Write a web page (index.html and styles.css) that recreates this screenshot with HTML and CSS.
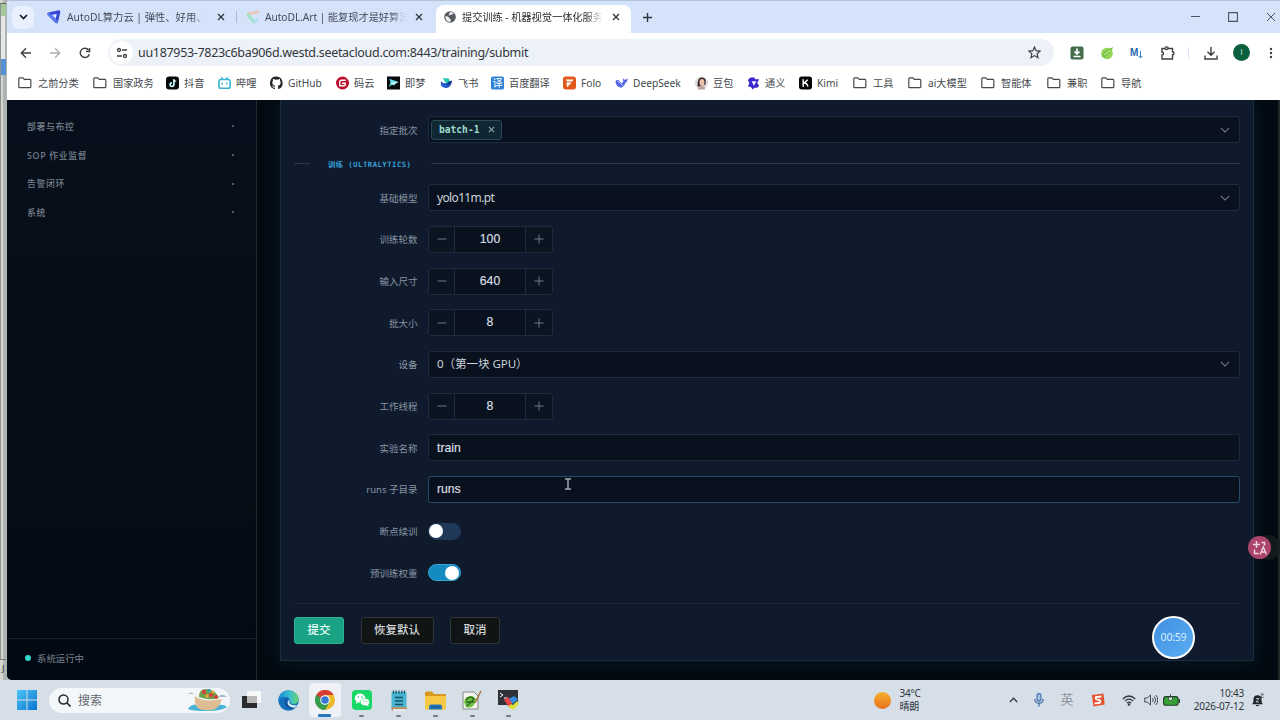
FILE: index.html
```html
<!DOCTYPE html>
<html lang="zh-CN">
<head>
<meta charset="utf-8">
<title>提交训练</title>
<link rel="stylesheet" href="styles.css">
</head>
<body>
<svg class="defs" width="0" height="0">
  <symbol id="folder" viewBox="0 0 15 13"><path d="M.8 1.9q0-1 1-1h3.4l1.6 1.7h6q1 0 1 1v7q0 1-1 1h-11q-1 0-1-1z" fill="none" stroke="#45494d" stroke-width="1.3"/></symbol>
  <symbol id="x" viewBox="0 0 8 8"><path d="M1 1l6 6M7 1L1 7" fill="none" stroke="currentColor" stroke-width="1.3"/></symbol>
  <symbol id="chev" viewBox="0 0 10 6"><path d="M.8.8L5 5 9.200.8" fill="none" stroke="currentColor" stroke-width="1.1"/></symbol>
  <symbol id="minus" viewBox="0 0 10 10"><path d="M.5 5h9" stroke="currentColor" stroke-width="1"/></symbol>
  <symbol id="plus" viewBox="0 0 10 10"><path d="M.5 5h9M5 .5v9" stroke="currentColor" stroke-width="1"/></symbol>
</svg>
<div class="screen">
 <div class="desktop">
  <div class="behind"><i class="b1"></i><i class="b2"></i><i class="b3"></i><i class="b4"></i><span class="b5">J</span></div>
  <div class="browser">
   <div class="tabstrip">
    <div class="tabsearch"><svg width="9" height="6"><path d="M1 1l3.500 3.500L8 1" fill="none" stroke="#15181c" stroke-width="1.700"/></svg></div>
    <div class="tab t1">
      <svg width="14" height="14" viewBox="0 0 14 14"><path d="M1.800 4L11.800 1.800 9.500 11.800z" fill="none" stroke="#3846d4" stroke-width="3" stroke-linejoin="round"/><path d="M1.800 4.500l7.500 7.300" stroke="#5b7cf0" stroke-width="2.800" stroke-linecap="round"/></svg>
      <span class="tt w1">AutoDL算力云 | 弹性、好用、省</span><svg class="cl" width="8" height="8"><use href="#x"/></svg>
    </div>
    <i class="tabsep"></i>
    <div class="tab t2">
      <svg width="14" height="14" viewBox="0 0 14 14"><path d="M2 4L12 2" stroke="#efc5b4" stroke-width="2.600" stroke-linecap="round"/><path d="M2 5l6 7" stroke="#9fe3c4" stroke-width="3" stroke-linecap="round"/><path d="M8 12q3-1 3-4" stroke="#b0dcf0" stroke-width="2.400" fill="none"/></svg>
      <span class="tt w2">AutoDL.Art | 能复现才是好算法</span><svg class="cl" width="8" height="8"><use href="#x"/></svg>
    </div>
    <div class="tab active">
      <svg width="12" height="12" viewBox="0 0 12 12"><circle cx="6" cy="6" r="5.800" fill="#55595e"/><path d="M1.300 5q3 0 4 2t2 2q-1 2-2 2-4-1-4-6zM6 1q2-.2 3.800 1.600Q8 4 7 3.700T5 4.500 6 1z" fill="#eef1f5"/></svg>
      <span class="tt w3">提交训练 - 机器视觉一体化服务</span><svg class="cl" width="8" height="8"><use href="#x"/></svg>
    </div>
    <svg class="newtab" width="9" height="9" viewBox="0 0 9 9"><path d="M0 4.500h9M4.500 0v9" stroke="#30363c" stroke-width="1.400"/></svg>
    <div class="winctl">
      <svg width="9" height="9"><path d="M0 4.500h9" stroke="#4b5563" stroke-width="1"/></svg>
      <svg width="10" height="10"><path d="M.6.6h8.800v8.800H.6z" fill="none" stroke="#4b5563" stroke-width="1.100"/></svg>
      <svg width="10" height="10"><path d="M1 1l8 8M9 1L1 9" stroke="#4b5563" stroke-width="1"/></svg>
    </div>
   </div>
   <div class="toolbar">
     <svg class="nav" width="12" height="12" viewBox="0 0 12 12"><path d="M11 6H1.500M6 1.300L1.300 6 6 10.700" fill="none" stroke="#3c4043" stroke-width="1.400"/></svg>
     <svg class="nav" width="12" height="12" viewBox="0 0 12 12"><path d="M1 6h9.500M6 1.300L10.700 6 6 10.700" fill="none" stroke="#abafb3" stroke-width="1.300"/></svg>
     <svg class="nav" width="12" height="12" viewBox="0 0 12 12"><path d="M10.300 7.200A4.600 4.600 0 1 1 9.500 3M10.600 1v3.500H7" fill="none" stroke="#3c4043" stroke-width="1.400"/></svg>
     <div class="omni">
       <div class="site"><svg width="12" height="12" viewBox="0 0 12 12"><path d="M6 3h5M1 9h5" stroke="#3c4043" stroke-width="1.400"/><circle cx="3" cy="3" r="1.500" fill="none" stroke="#3c4043" stroke-width="1.300"/><circle cx="9" cy="9" r="1.500" fill="none" stroke="#3c4043" stroke-width="1.300"/></svg></div>
       <span class="url">uu187953-7823c6ba906d.westd.seetacloud.com:8443/training/submit</span>
       <svg class="star" width="13" height="13" viewBox="0 0 13 13"><path d="M6.500 1l1.600 3.700 4 .4-3 2.600.9 4-3.500-2.100L3 11.700l.9-4-3-2.600 4-.4z" fill="none" stroke="#3c4043" stroke-width="1.200"/></svg>
     </div>
     <div class="exts">
       <svg width="14" height="14" viewBox="0 0 14 14"><rect x=".5" y=".5" width="13" height="13" rx="2" fill="#456c4b"/><path d="M7 2.500v5M4.500 5.500L7 8l2.500-2.500M3.500 10.500h7" fill="none" stroke="#fff" stroke-width="1.700"/></svg>
       <svg width="14" height="14" viewBox="0 0 14 14"><circle cx="7" cy="7.500" r="5.800" fill="#93d456"/><path d="M2 10Q4 4 11 2L13 1 12 4Q9 5 5 12" fill="#77c443"/><path d="M4 9l6-5" stroke="#d5f0b5"/></svg>
       <div class="md">M<svg width="5" height="8"><path d="M2.500 0v7M.5 5l2 2 2-2" stroke="#3483ca" fill="none"/></svg></div>
       <svg width="14" height="14" viewBox="0 0 14 14"><path d="M1 2.500h3q0 1 1.500 1T7 2.500h4.500v3.200q1.500 0 1.500 1.500t-1.500 1.500v4.300H1V9q1.500 0 1.500-1.500T1 6z" fill="none" stroke="#3c4043" stroke-width="1.400"/><path d="M4.500 2q0-1.200 1.300-1.200T7.200 2" fill="none" stroke="#3c4043" stroke-width="1.300"/></svg>
       <i class="esep"></i>
       <svg width="14" height="14" viewBox="0 0 14 14"><path d="M7 1v8M3.500 5.700L7 9.200l3.500-3.500M1 9.500V13h12V9.500" fill="none" stroke="#3c4043" stroke-width="1.400"/></svg>
       <b class="avatar">I</b>
       <svg class="dots" width="4" height="12"><circle cx="2" cy="2" r="1.200" fill="#3c4043"/><circle cx="2" cy="6" r="1.200" fill="#3c4043"/><circle cx="2" cy="10" r="1.200" fill="#3c4043"/></svg>
     </div>
   </div>
   <div class="bookmarks">
     <span class="f"><svg><use href="#folder"/></svg>之前分类</span>
     <span class="f"><svg><use href="#folder"/></svg>国家政务</span>
     <span><svg viewBox="0 0 14 14"><rect width="14" height="14" rx="3.500" fill="#08080b"/><path d="M8.300 3v5.500A2 2 0 1 1 6 6.700" fill="none" stroke="#4be4e7" stroke-width="1.700"/><path d="M8.500 3q.5 2 2.500 2.200M8.600 3v5.500A2 2 0 1 1 6.400 6.800" fill="none" stroke="#fff" stroke-width="1.200"/></svg>抖音</span>
     <span><svg viewBox="0 0 14 14"><rect x="1" y="3.300" width="12" height="9.400" rx="2" fill="none" stroke="#35b5cf" stroke-width="1.700"/><path d="M3.500.8l2 2.300M10.500.8l-2 2.300M4.500 6.500v2M9.500 6.500v2" stroke="#35b5cf" stroke-width="1.500"/></svg>哔哩</span>
     <span><svg viewBox="0 0 16 16"><path fill="#22262b" d="M8 0a8 8 0 0 0-2.500 15.600c.4.100.5-.2.500-.4v-1.500c-2.200.5-2.700-1-2.700-1-.4-.9-.9-1.200-.9-1.200-.7-.5.100-.5.100-.5.800.1 1.200.8 1.200.8.700 1.300 1.900.9 2.300.7.100-.5.300-.9.500-1.100-1.800-.2-3.600-.9-3.600-4 0-.9.300-1.600.8-2.100-.1-.2-.4-1 .1-2.100 0 0 .7-.2 2.200.8a7.600 7.600 0 0 1 4 0c1.500-1 2.200-.8 2.200-.8.400 1.100.2 1.900.1 2.100.5.500.8 1.200.8 2.100 0 3.100-1.900 3.700-3.700 3.900.3.300.6.800.6 1.500v2.200c0 .2.100.5.500.4A8 8 0 0 0 8 0z"/></svg>GitHub</span>
     <span><svg viewBox="0 0 14 14"><circle cx="7" cy="7" r="7" fill="#bd0f2f"/><path d="M10.500 4H6Q4 4 4 6v4h4.500q1.500 0 1.500-1.500V7.200H6.500" fill="none" stroke="#fff" stroke-width="1.500"/></svg>码云</span>
     <span><svg viewBox="0 0 14 14"><rect width="14" height="14" fill="#08090d"/><path d="M2.500 2.500L12.500 6 9.500 7.500 7.500 10 6 8.500 2 11l1.800-4.500z" fill="#5fdde5"/><path d="M3.800 6.500L12.500 6 6 8.500z" fill="#eafcff"/></svg>即梦</span>
     <span><svg viewBox="0 0 14 14"><path d="M3 2h6q2 2 2 5L7 8z" fill="#26c9b0"/><path d="M1 5q5 5 12-.5-1 8-7 8-4-.5-5-3z" fill="#245bd0"/><path d="M7 8q3-4 6-3.500-1 3-3 5z" fill="#173584"/></svg>飞书</span>
     <span><svg viewBox="0 0 14 14"><rect width="14" height="14" rx="2" fill="#2f83d6"/><text x="7" y="11" font-size="11" text-anchor="middle" fill="#fff">译</text></svg>百度翻译</span>
     <span><svg viewBox="0 0 14 14"><rect width="14" height="14" rx="3" fill="#e2581c"/><path d="M3 3.200h8.300L10 5.400H4.200zM3.800 6.500H9L7.800 8.600H6.500L5.500 11H4.200z" fill="#fff"/></svg>Folo</span>
     <span class="ds"><svg viewBox="0 0 14 14"><path d="M.5 5q1-1.500 3.500-1L7 7l2-1q-1-2 0-4 .5 2 2 1.500Q12.500 3 13.500 2q.3 4-2.500 5-1 4-4.500 5Q1 11 .5 5z" fill="#5566e4"/><path d="M3 5.500Q5 5 8.500 10" stroke="#dce2ff" fill="none"/></svg>DeepSeek</span>
     <span><svg viewBox="0 0 14 14"><circle cx="7" cy="7" r="7" fill="#ddd9d6"/><path d="M3 11Q2 1 7.500 1T11 9z" fill="#30242a"/><ellipse cx="7.500" cy="6.500" rx="2.700" ry="3.700" fill="#edc1ac"/><path d="M3 14q1-4 4-4t4 4z" fill="#b9a49d"/></svg>豆包</span>
     <span><svg viewBox="0 0 14 14"><path d="M4.500 1H8l1 2h4l-2 4 2 3-2 2H8l-2 2-2-3H1l1.500-4L1 4l1.500-2z" fill="#3a28d2"/><path d="M5 5h5L7.500 10z" fill="#fff"/></svg>通义</span>
     <span><svg viewBox="0 0 14 14"><rect width="14" height="14" rx="3" fill="#050505"/><path d="M4.500 3v8M9.500 3.500l-4 3.500q3.500 0 4 4" fill="none" stroke="#fff" stroke-width="1.600"/></svg>Kimi</span>
     <span class="f"><svg><use href="#folder"/></svg>工具</span>
     <span class="f"><svg><use href="#folder"/></svg>ai大模型</span>
     <span class="f"><svg><use href="#folder"/></svg>智能体</span>
     <span class="f"><svg><use href="#folder"/></svg>兼职</span>
     <span class="f"><svg><use href="#folder"/></svg>导航</span>
   </div>
   <div class="page">
     <aside class="side">
       <nav><a>部署与布控<i></i></a><a>SOP 作业监督<i></i></a><a>告警闭环<i></i></a><a>系统<i></i></a></nav>
       <div class="status"><i></i>系统运行中</div>
     </aside>
     <main class="main">
       <section class="card">
         <div class="row"><label>指定批次</label><div class="field select"><span class="chip">batch-1<svg width="7" height="7"><use href="#x"/></svg></span><svg class="chev" width="10" height="6"><use href="#chev"/></svg></div></div>
         <div class="divider"><i class="l1"></i><span>训练 (ULTRALYTICS)</span><i class="l2"></i></div>
         <div class="row"><label>基础模型</label><div class="field select"><span class="val">yolo11m.pt</span><svg class="chev" width="10" height="6"><use href="#chev"/></svg></div></div>
         <div class="row"><label>训练轮数</label><div class="step"><b><svg><use href="#minus"/></svg></b><span>100</span><b><svg><use href="#plus"/></svg></b></div></div>
         <div class="row"><label>输入尺寸</label><div class="step"><b><svg><use href="#minus"/></svg></b><span>640</span><b><svg><use href="#plus"/></svg></b></div></div>
         <div class="row"><label>批大小</label><div class="step"><b><svg><use href="#minus"/></svg></b><span>8</span><b><svg><use href="#plus"/></svg></b></div></div>
         <div class="row"><label>设备</label><div class="field select"><span class="val dev">0（第一块 GPU）</span><svg class="chev" width="10" height="6"><use href="#chev"/></svg></div></div>
         <div class="row"><label>工作线程</label><div class="step"><b><svg><use href="#minus"/></svg></b><span>8</span><b><svg><use href="#plus"/></svg></b></div></div>
         <div class="row"><label>实验名称</label><div class="field"><span class="inp">train</span></div></div>
         <div class="row"><label>runs 子目录</label><div class="field hot"><span class="inp">runs</span></div></div>
         <div class="row"><label>断点续训</label><div class="switch"><i></i></div></div>
         <div class="row"><label>预训练权重</label><div class="switch on"><i></i></div></div>
         <div class="actions"><span class="btn go">提交</span><span class="btn wide">恢复默认</span><span class="btn">取消</span></div>
       </section>
     </main>
     <i class="edge"></i>
   </div>
  </div>
 </div>
 <div class="taskbar">
   <svg class="win" width="20" height="20" viewBox="0 0 20 20"><defs><linearGradient id="wg" x2="1" y2="1"><stop stop-color="#4cc4f4"/><stop offset="1" stop-color="#0877d0"/></linearGradient></defs><path d="M0 0h9.500v9.500H0zM10.500 0H20v9.500h-9.500zM0 10.500h9.500V20H0zM10.500 10.500H20V20h-9.500z" fill="url(#wg)"/></svg>
   <div class="search">
     <svg width="13" height="13" viewBox="0 0 13 13"><circle cx="5.500" cy="5.500" r="4.500" fill="none" stroke="#22282e" stroke-width="1.500"/><path d="M8.800 8.800l3.700 3.700" stroke="#22282e" stroke-width="1.600"/></svg><span>搜索</span>
     <svg class="boat" width="42" height="24" viewBox="0 0 42 24"><path d="M1 6q3-3 6 0zM31 9q4-5 9 0z" fill="#a9bccb"/><path d="M1 21q3-6 13-4t18 0q5-1 8 2-5 4-20 4T1 21z" fill="#4bb3d5"/><path d="M8 8q8 7 27 3-2 9-10 11-12 1-15-3T8 8z" fill="#dfbd93"/><path d="M12 9q0-8 7-8 9 0 13 9-10 3-20-1z" fill="#6aa650"/><g fill="#d8433c"><circle cx="17" cy="4" r="2.200"/><circle cx="24" cy="7" r="2.300"/><circle cx="29" cy="9" r="2"/></g><g fill="#e8ad35"><circle cx="20" cy="8" r="1.800"/><circle cx="26" cy="4" r="1.500"/></g><circle cx="22" cy="2.500" r="1.700" fill="#3ea2bb"/></svg>
   </div>
   <div class="apps">
     <span><svg width="20" height="20" viewBox="0 0 20 20"><path d="M1 6h15v12H1z" fill="#2a2b2d"/><path d="M6 1h14v12H6z" fill="#fafafa" opacity=".88"/><path d="M6 6h10v7H6z" fill="#b8b9bb"/></svg></span>
     <span><svg width="21" height="21" viewBox="0 0 21 21"><defs><linearGradient id="eg" x2="1" y2="0"><stop stop-color="#1b8bd6"/><stop offset=".55" stop-color="#35bfcf"/><stop offset="1" stop-color="#68d46e"/></linearGradient></defs><circle cx="10.500" cy="10.500" r="10.200" fill="#1270bd"/><path d="M.6 9Q2 .5 10.500.5q10 1 10 8.500 0 5-5 5-4 0-3-2.500Q12 6.500 7 7 2 7 .6 11z" fill="url(#eg)"/><path d="M7 9q-2 8 6 10 4 0 6-4-7 3-10-2-1-2 1-5z" fill="#17509e"/><path d="M12.200 9.500q-1.800 3 0 4.500 3 2 7 .7l-2 3q-6 0-7.500-4-.6-3 2.500-4.200z" fill="#d5edf3"/></svg></span>
     <span class="cur run"><svg width="20" height="20" viewBox="0 0 20 20"><circle cx="10" cy="10" r="10" fill="#ebb92a"/><path d="M1.300 5A10 10 0 0 0 10 20l4.300-7.500L10 10z" fill="#389b4b"/><path d="M1.300 5L6 13l4-3-2-5z" fill="#389b4b"/><path d="M1.300 5A10 10 0 0 1 18.700 5H10L6 8z" fill="#d83f34"/><circle cx="10" cy="10" r="4.800" fill="#fff"/><circle cx="10" cy="10" r="3.800" fill="#3876d6"/></svg></span>
     <span class="run"><svg width="20" height="20" viewBox="0 0 20 20"><rect width="20" height="20" rx="4" fill="#17d866"/><ellipse cx="8" cy="8" rx="5.300" ry="4.400" fill="#fff"/><path d="M4.500 11L4 14l3-2z" fill="#fff"/><ellipse cx="13" cy="12" rx="4.500" ry="3.800" fill="#fff" stroke="#17d866" stroke-width=".6"/><path d="M14 15l2.500 1.500L16 14z" fill="#fff"/><g fill="#17b95b"><circle cx="6.300" cy="7" r=".7"/><circle cx="9.800" cy="7" r=".7"/><circle cx="11.700" cy="11.200" r=".6"/><circle cx="14.300" cy="11.200" r=".6"/></g></svg></span>
     <span class="run"><svg width="16" height="21" viewBox="0 0 16 21"><rect x=".5" y="2" width="15" height="18" rx="1.500" fill="#4ab5cf"/><path d="M.5 17h15v2q0 2-2 2h-11q-2 0-2-2z" fill="#bd8e63"/><path d="M2 19h13v2H2z" fill="#e7e8e9"/><path d="M2.500.5v3M5.200.5v3M8 .5v3M10.800.5v3M13.500.5v3M4 7.500h8M4 11h8M4 14.500h8" stroke="#14546a" stroke-width="1.300"/></svg></span>
     <span class="run"><svg width="21" height="19" viewBox="0 0 21 19"><path d="M0 2q0-1.500 1.500-1.500H7L9 3h12v4H0z" fill="#d8981f"/><path d="M0 5h21v12q0 1.500-1.500 1.500h-18Q0 18.500 0 17z" fill="#f6c843"/><path d="M4 18.500v-3q0-2 2-2h9q2 0 2 2v3z" fill="#2277b8"/><path d="M6 16h9" stroke="#174f87"/></svg></span>
     <span class="run"><svg width="20" height="20" viewBox="0 0 20 20"><path d="M1 2h11l4 4v13H1z" fill="#f4f5f1" stroke="#818a82"/><path d="M2 12q1-7 8-6 6 2 3 7-3 6-9 4z" fill="#6dc53c"/><path d="M4 10q4-5 8-1L5 16M4 12h8" fill="none" stroke="#315f2b" stroke-width="1.300"/><path d="M19 1l-6 12" stroke="#a97945" stroke-width="1.500"/></svg></span>
     <span class="run"><svg width="21" height="20" viewBox="0 0 21 20"><path d="M0 0h20v15H0z" fill="#303238"/><path d="M2 3l3 2-3 2M6 8h3" stroke="#fff" fill="none"/><path d="M6 10l4-3 5 5-4 5z" fill="#e84646"/><path d="M11 9l5-3 4 3-5 5z" fill="#338de0"/><path d="M10 17l3-3 2 1 4-4 2 3-6 6z" fill="#dce23b"/></svg></span>
   </div>
   <div class="weather"><i></i><span>34°C<br>晴朗</span></div>
   <div class="tray">
     <span><svg width="9" height="6"><path d="M.8 5L4.500 1.200 8.200 5" fill="none" stroke="#32383f" stroke-width="1.300"/></svg></span>
     <span><svg width="10" height="14" viewBox="0 0 10 14"><rect x="3" y=".6" width="4" height="7.500" rx="2" fill="#a6c4e4" stroke="#3d6ca8" stroke-width="1.100"/><path d="M.8 6q0 4.200 4.200 4.200T9.200 6M5 10v3.500" fill="none" stroke="#3d6ca8" stroke-width="1.200"/></svg></span>
     <span class="ime">英</span>
     <span><svg width="14" height="14" viewBox="0 0 14 14"><path d="M.8 2L12.500.6l1.200 11L2.500 13.500z" fill="#e4552f"/><path d="M10.500 3.500L5 4q-1 1.800 1 2.500l3 .8Q10 9.500 8 10l-4.300.3" fill="none" stroke="#fff" stroke-width="1.800"/></svg></span>
     <span><svg width="14" height="11" viewBox="0 0 14 11"><path d="M.7 4Q7-2 13.300 4M2.800 6.200Q7 2 11.200 6.200M4.800 8.200Q7 6 9.200 8.200" fill="none" stroke="#32383f" stroke-width="1.200"/><circle cx="7" cy="9.500" r="1.200" fill="#32383f"/></svg></span>
     <span><svg width="14" height="12" viewBox="0 0 14 12"><path d="M.7 4h2.500L6.500 1v10L3.200 8H.7zM8.500 4q1.500 2 0 4M10.300 2.500q3 3.500 0 7M12 1q3.500 5 0 10" fill="none" stroke="#444a51" stroke-width="1"/></svg></span>
     <span><svg width="17" height="12" viewBox="0 0 17 12"><rect x=".6" y="2.600" width="14.500" height="8.600" rx="2.300" fill="#38a136" stroke="#263f2a" stroke-width="1.100"/><path d="M16.300 5v4" stroke="#263f2a" stroke-width="1.300"/><path d="M7.500 0v4M5.500 3h4v2.500q-2 2-4 0z" fill="#f0f5ee" stroke="#263f2a" stroke-width=".8"/></svg></span>
     <span class="clock">10:43<br>2026-07-12</span>
     <span><svg width="13" height="14" viewBox="0 0 13 14"><path d="M0 11.200q1.500-1 1.500-5 0-4 4-4t4 4q0 4 1.500 5zM3.500 12h4q-2 2.500-4 0z" fill="#1f252b"/><path d="M8.500 1h3l-3 3.500h3" fill="none" stroke="#46525d" stroke-width=".9"/><path d="M4 5.500h3L4 9h3" fill="none" stroke="#c3ccd4" stroke-width=".9"/></svg></span>
   </div>
 </div>
 <div class="translate"><svg width="16" height="16" viewBox="0 0 16 16"><path d="M4.500 1v7M1 4.500h7M9.500 2.500h3v3M2.500 9.500v4h4" fill="none" stroke="#eed5de" stroke-width="1.500"/><path d="M8 14.500L11.300 7l3.200 7.500M9.200 12h4.200" fill="none" stroke="#eed5de" stroke-width="1.400"/></svg></div>
 <div class="timer">00:59</div>
 <svg class="ibeam" width="6" height="12" viewBox="0 0 6 12"><path d="M0 .8h2L3 1.500 4 .8h2M3 1.500v9M0 11.200h2L3 10.500l1 .7h2" fill="none" stroke="#c3c9d0" stroke-width="1.200"/></svg>
</div>
</body>
</html>
```
FILE: styles.css
```css
* { box-sizing: border-box; }
body { margin: 0; width: 1280px; height: 720px; overflow: hidden; font-family: "Noto Sans", "Noto Sans CJK SC", sans-serif; font-size: 11px; }
i, b { font-style: normal; }
svg { display: block; flex: none; }
.defs { position: absolute; }
.screen { position: relative; width: 1280px; height: 720px; display: flex; flex-direction: column; overflow: hidden; background: #d6dfe8; }
.desktop { height: 680px; display: flex; background: #bcc0be; }
.behind { width: 7px; display: flex; flex-direction: column; background: linear-gradient(90deg, transparent 3px, #aeb4b4 3px) #d5d4cf; overflow: hidden; }
.behind i { display: block; flex: none; width: 6px; border-left: 1px solid #8c9393; }
.b1 { height: 13px; margin-top: 3px; background: #a6c799; border-top: 1px solid #626762; }
.b2 { height: 43px; background: linear-gradient(90deg, #e6e8e6 4px, transparent 4px); }
.b3 { height: 16px; background: #5592d5; }
.b4 { height: 585px; border-bottom: 1px solid #777; }
.b5 { font-size: 9px; color: #333; line-height: 18px; padding-left: 2px; }
.browser { width: 1273px; flex: none; display: flex; flex-direction: column; border-radius: 4px 0 0 5px; overflow: hidden; background: #fff; }

.tabstrip { height: 33px; display: flex; align-items: center; background: #d4e2fa; border-top: 1px solid #b5c2da; }
.tabsearch { width: 22px; height: 23px; margin-left: 5px; border-radius: 7px; background: #e8f0fd; display: flex; align-items: center; justify-content: center; }
.tab { display: flex; align-items: center; height: 28px; color: #454c57; font-size: 10.300px; }
.t1 { width: 202px; padding-left: 13px; }
.t2 { width: 193px; padding-left: 9px; }
.tabsep { width: 1px; height: 12px; background: #a9bbd9; }
.tt { white-space: nowrap; overflow: hidden; line-height: 16px; -webkit-mask-image: linear-gradient(90deg, #000 88%, transparent); mask-image: linear-gradient(90deg, #000 88%, transparent); }
.w1 { width: 141px; margin-left: 6px; }
.w2 { width: 141px; margin-left: 5px; letter-spacing: -.1px; }
.w3 { width: 141px; margin-left: 6px; letter-spacing: -.1px; }
.cl { margin-left: 9px; color: #30363c; }
.active { width: 195px; margin: 4px 0 0 6px; padding: 0 0 4px 8px; background: #fff; border-radius: 8px 8px 0 0; color: #2c3035; }
.newtab { margin-left: 12px; }
.winctl { margin-left: auto; width: 89px; display: flex; justify-content: space-between; padding-right: 4px; }

.toolbar { height: 37px; padding-top: 2px; display: flex; align-items: center; }
.nav { margin-left: 13px; margin-right: 5px; }
.nav + .nav { margin-left: 12px; margin-right: 6px; }
.omni { width: 946px; height: 27px; margin-left: 11px; border-radius: 14px; background: #edf2f9; display: flex; align-items: center; padding: 0 13px 0 2px; }
.site { width: 23px; height: 23px; border-radius: 12px; background: #fff; display: flex; align-items: center; justify-content: center; }
.url { margin-left: 5px; font-size: 12.500px; letter-spacing: -.32px; color: #33373b; white-space: nowrap; }
.star { margin-left: auto; }
.exts { width: 208px; margin-left: 16px; display: grid; grid-template-columns: 30px 30px 31px 27px 16px 29px 30px 10px; align-items: center; }
.md { font: 700 10px "Liberation Sans", sans-serif; color: #2668b0; display: flex; align-items: center; }
.md svg { margin-top: 5px; }
.esep { height: 12px; width: 1px; background: #d7e3f7; }
.avatar { width: 17px; height: 17px; border-radius: 9px; background: #0a603d; color: #b6d9c8; font: 9px/17px "Liberation Sans", sans-serif; text-align: center; }
.dots { margin-left: 6px; }
.bookmarks { height: 30px; padding: 0 0 4px 11px; display: grid; align-items: center; grid-template-columns: 75px 73px 52px 52px 66px 51px 53px 51px 72px 52px 80px 52px 52px 54px 55px 73px 66px 54px 60px; color: #45494d; font-size: 10.200px; }
.bookmarks span { display: flex; align-items: center; gap: 5px; white-space: nowrap; line-height: 16px; }
.bookmarks svg { width: 13px; height: 14px; }
.bookmarks .f svg { width: 14px; height: 12px; }
.bookmarks .f { gap: 6px; }

.page { height: 580px; display: flex; background: #030a12; }
.side { width: 250px; flex: none; display: flex; flex-direction: column; border-right: 1px solid #1b2832; background: linear-gradient(#070f1c, #050e16 55%, #030912); color: #76818e; }
.side nav { padding: 12px 22px 0 20px; display: flex; flex-direction: column; flex: 1; }
.side a { height: 28.700px; display: flex; align-items: center; justify-content: space-between; font-size: 8.800px; font-weight: 500; letter-spacing: .7px; }
.side a i { width: 2px; height: 2px; border-radius: 1px; background: #6d7884; }
.status { height: 42px; border-top: 1px solid #17222c; padding: 0 0 4px 18px; display: flex; align-items: center; gap: 6px; font-size: 9.400px; color: #7a8490; }
.status i { width: 6px; height: 6px; border-radius: 3px; background: #33d6cf; }
.main { width: 1021px; flex: none; padding-left: 23px; overflow: hidden; }
.card { width: 974px; height: 561px; padding: 9px 13px 0; background: #0f1b2d; border: solid #1a2d3e; border-width: 0 1px 1px; box-shadow: 0 0 18px rgba(10, 72, 82, .3); }
.edge { width: 2px; background: #1f2927; }
.row { height: 41.670px; display: flex; align-items: center; }
.row label { width: 123.500px; margin-right: 10.500px; text-align: right; color: #8994a3; font-size: 9.500px; white-space: nowrap; }
.field { width: 812px; height: 27px; border: 1px solid #1c2c3c; border-radius: 3px; background: #08111d; display: flex; align-items: center; }
.hot { border-color: #254c64; }
.select { justify-content: space-between; padding-right: 9px; }
.chev { color: #6d7683; }
.chip { width: 71px; height: 20px; margin-left: 2px; padding: 0 6px 0 7px; border: 1px solid #294b56; border-radius: 3px; background: #102632; display: flex; align-items: center; justify-content: space-between; font: 700 9.600px "DejaVu Sans Mono", monospace; color: #9edbd0; }
.chip svg { color: #8da4aa; }
.val { margin-left: 8px; font-size: 12px; letter-spacing: -.65px; color: #cbd2da; white-space: nowrap; }
.dev { font-size: 11.600px; letter-spacing: -.1px; padding-bottom: 2px; }
.inp { margin-left: 8px; font: 12.200px "Liberation Sans", sans-serif; color: #d6dce3; -webkit-text-stroke: .2px #d6dce3; }
.step { width: 125px; height: 27px; border: 1px solid #1c2c3c; border-radius: 3px; background: #08111d; display: grid; grid-template-columns: 25px 72px 26px; overflow: hidden; }
.step b { display: flex; align-items: center; justify-content: center; background: #0b1522; color: #6f7883; }
.step b svg { width: 10px; height: 10px; }
.step span { border: solid #1c2c3c; border-width: 0 1px; text-align: center; font: 12.200px/24px "Liberation Sans", sans-serif; color: #d6dce3; -webkit-text-stroke: .2px #d6dce3; }
.divider { height: 26.300px; display: flex; align-items: center; }
.divider i { height: 1px; background: #263748; }
.l1 { width: 16px; }
.l2 { width: 809px; margin-left: auto; }
.divider span { margin-left: 18px; font: 700 7.300px "DejaVu Sans Mono", "Noto Sans CJK SC", monospace; letter-spacing: .46px; color: #369fd8; white-space: nowrap; }
.switch { width: 33px; height: 17px; border-radius: 9px; background: #1f3857; padding: 2px 1px; }
.switch i { display: block; width: 14px; height: 14px; border-radius: 7px; background: #fff; margin-top: -.500px; }
.switch.on { background: #148ac0; border: 1px solid #38a6d2; padding: 1px; }
.switch.on i { margin-left: 15px; }
.actions { margin-top: 9px; padding-top: 13px; border-top: 1px solid #1a2838; display: flex; }
.btn { width: 50px; height: 27px; margin-right: 16.500px; border: 1px solid #303638; border-radius: 3px; background: #111414; color: #d2d6d9; font-size: 11.500px; font-weight: 500; line-height: 23px; text-align: center; }
.go { background: #19a283; border-color: #2eb395; color: #edfffb; }
.wide { width: 73px; }

.taskbar { height: 40px; display: flex; align-items: center; background: #d6dfe8; color: #30363d; }
.win { margin-left: 17px; }
.search { width: 181px; height: 25px; margin-left: 12px; border-radius: 13px; background: #f4f7fa; display: flex; align-items: center; padding-left: 9px; }
.search span { margin-left: 7px; font-size: 12px; color: #62686e; }
.boat { margin-left: auto; margin-right: 1px; }
.apps { margin-left: 3px; display: grid; grid-template-columns: repeat(8, 36.800px); }
.apps span { height: 34px; display: flex; align-items: center; justify-content: center; position: relative; }
.apps .cur { background: #eef2f7; border-radius: 4px; width: 32px; margin: 0 2.400px; }
.run::after { content: ""; position: absolute; bottom: 0; left: calc(50% - 2.500px); width: 5px; height: 2px; border-radius: 1px; background: #727a82; }
.cur::after { left: 9px; width: 13px; height: 3px; background: #2877b8; }
.weather { margin-left: 347px; width: 60px; display: flex; gap: 8px; align-items: center; font-size: 10px; line-height: 13.500px; letter-spacing: -.2px; white-space: nowrap; }
.weather i { width: 17px; height: 17px; border-radius: 9px; background: linear-gradient(#f7b22f, #e86e19); }
.tray { margin-left: auto; display: grid; grid-template-columns: 26px 26px 30px 32px 30px 14px 26px 62px 24px; align-items: center; margin-right: 10px; }
.tray span { display: flex; justify-content: center; align-items: center; }
.tray .clock { display: block; text-align: right; font-size: 10px; line-height: 13.500px; letter-spacing: -.2px; padding-right: 2px; white-space: nowrap; }
.tray .ime { font-size: 13px; line-height: 16px; padding-bottom: 2px; color: #8e949b; }

.translate { position: absolute; left: 1248px; top: 536px; width: 23px; height: 23px; border-radius: 12px; background: #ab446c; display: flex; align-items: center; justify-content: center; box-shadow: 9px 0 0 1px rgba(22, 30, 32, .8); }
.timer { position: absolute; left: 1152px; top: 616px; width: 43px; height: 43px; border-radius: 22px; border: 2px solid #fff; background: linear-gradient(135deg, #438ee4, #59aef0); color: #d9edff; font-size: 10.500px; letter-spacing: -.2px; line-height: 38px; text-align: center; }
.ibeam { position: absolute; left: 565px; top: 478px; }
```
